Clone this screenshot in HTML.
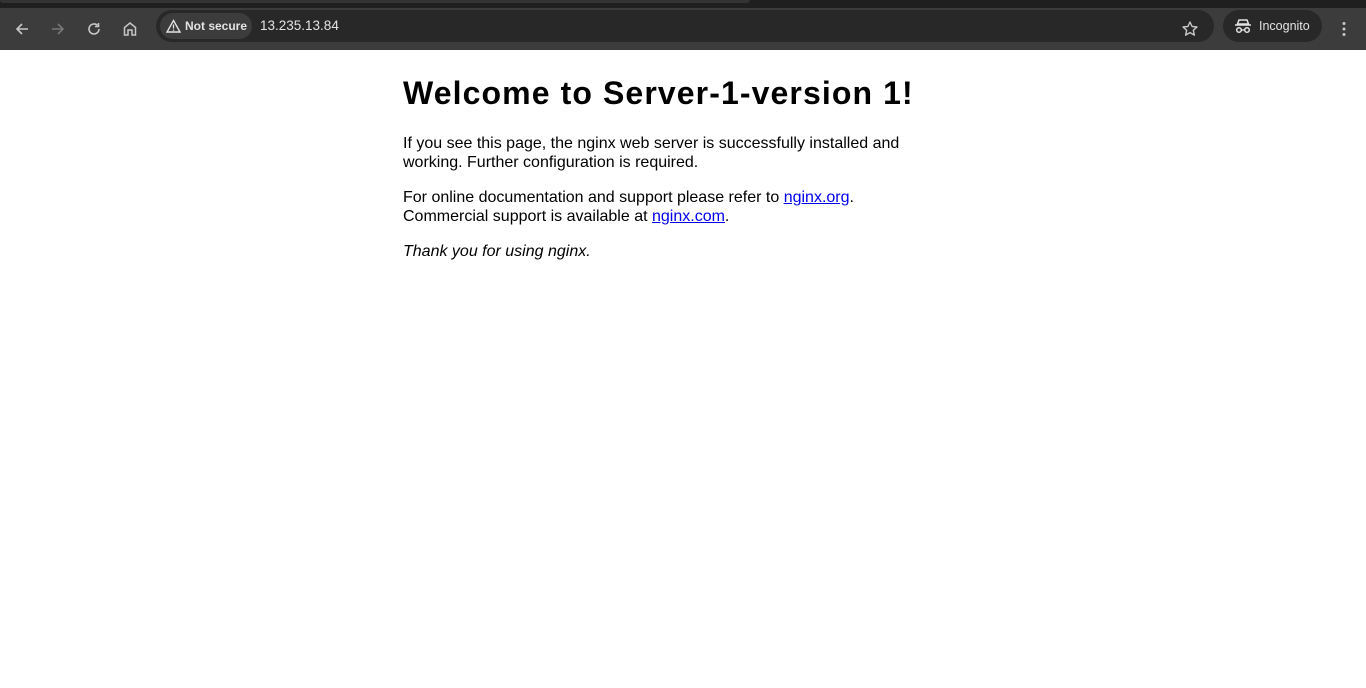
<!DOCTYPE html>
<html><head><meta charset="utf-8"><style>
html,body{margin:0;padding:0;background:#fff;width:1366px;height:688px;overflow:hidden}
.top{height:8px;background:#1f1f1f;position:relative}
.top .tab{position:absolute;left:0;top:0;width:750px;height:3px;background:#333;border-radius:0 0 6px 6px}
.bar{height:42px;background:#3c3c3c;position:relative;font-family:"Liberation Sans",sans-serif}
.ic{position:absolute;top:11px}
.omni{position:absolute;left:156px;top:2px;width:1058px;height:32px;background:#282828;border-radius:16px}
.ns{position:absolute;left:160px;top:5px;height:26px;width:92px;background:#3c3c3c;border-radius:13px;color:#e3e3e3;font-size:12px;font-weight:bold;line-height:26px}
.url{position:absolute;left:260px;top:10px;color:#e3e3e3;font-size:13.5px}
.inc{position:absolute;left:1223px;top:2px;width:99px;height:32px;background:#282828;border-radius:16px;color:#e3e3e3;font-size:12.5px;line-height:32px}
.page{width:560px;margin:0 auto;font-family:"Liberation Sans",sans-serif;font-size:16px;color:#000;line-height:19px}
h1{font-size:32px;margin:0;padding-top:25px;line-height:37px;letter-spacing:1.1px}
p{margin:16px 0}
a{color:#00e;text-decoration:underline}
</style></head><body>
<div class="top"><div class="tab"></div></div>
<div class="bar">
<svg class="ic" style="left:12px" width="20" height="20" viewBox="0 0 20 20"><path d="M16 10H5M10 5l-5 5 5 5" stroke="#c7c7c7" stroke-width="1.6" fill="none"/></svg>
<svg class="ic" style="left:48px" width="20" height="20" viewBox="0 0 20 20"><path d="M4 10h11M10 5l5 5-5 5" stroke="#777" stroke-width="1.6" fill="none"/></svg>
<svg class="ic" style="left:84px" width="20" height="20" viewBox="0 0 20 20"><path d="M15 10a5 5 0 1 1-1.5-3.6" stroke="#c7c7c7" stroke-width="1.6" fill="none"/><path d="M14.5 4v3.5H11" stroke="#c7c7c7" stroke-width="1.6" fill="none"/></svg>
<svg class="ic" style="left:120px" width="20" height="20" viewBox="0 0 20 20"><path d="M4.5 16V8.5L10 4l5.5 4.5V16h-3.5v-5h-4v5z" stroke="#c7c7c7" stroke-width="1.5" fill="none"/></svg>
<div class="omni"></div>
<div class="ns"><svg style="position:absolute;left:6px;top:6px" width="15" height="14" viewBox="0 0 15 14"><path d="M7.5 1.5L14 13H1z" stroke="#e3e3e3" stroke-width="1.4" fill="none"/><path d="M7.5 5.5v4M7.5 10.5v1.2" stroke="#e3e3e3" stroke-width="1.3"/></svg><span style="position:absolute;left:25px">Not secure</span></div>
<div class="url">13.235.13.84</div>
<svg class="ic" style="left:1180px" width="20" height="20" viewBox="0 0 20 20"><path d="M10 3l2.1 4.5 4.9.5-3.7 3.3 1.1 4.8L10 13.6 5.6 16.1l1.1-4.8L3 8l4.9-.5z" stroke="#c7c7c7" stroke-width="1.4" fill="none" stroke-linejoin="round"/></svg>
<div class="inc"><svg style="position:absolute;left:11px;top:8px" width="18" height="16" viewBox="0 0 18 16"><path d="M5 2h8l1.5 4h-11z M1 7h16" stroke="#e3e3e3" stroke-width="1.5" fill="none"/><circle cx="5" cy="12" r="2.3" stroke="#e3e3e3" stroke-width="1.5" fill="none"/><circle cx="13" cy="12" r="2.3" stroke="#e3e3e3" stroke-width="1.5" fill="none"/><path d="M7.3 12h3.4" stroke="#e3e3e3" stroke-width="1.3"/></svg><span style="position:absolute;left:36px">Incognito</span></div>
<svg class="ic" style="left:1334px" width="20" height="20" viewBox="0 0 20 20"><circle cx="10" cy="4.5" r="1.5" fill="#c7c7c7"/><circle cx="10" cy="10" r="1.5" fill="#c7c7c7"/><circle cx="10" cy="15.5" r="1.5" fill="#c7c7c7"/></svg>
</div>
<div class="page">
<h1>Welcome to Server-1-version 1!</h1>
<p style="margin-top:22px">If you see this page, the nginx web server is successfully installed and<br>working. Further configuration is required.</p>
<p>For online documentation and support please refer to <a href="#">nginx.org</a>.<br>Commercial support is available at <a href="#">nginx.com</a>.</p>
<p><em>Thank you for using nginx.</em></p>
</div>
</body></html>
